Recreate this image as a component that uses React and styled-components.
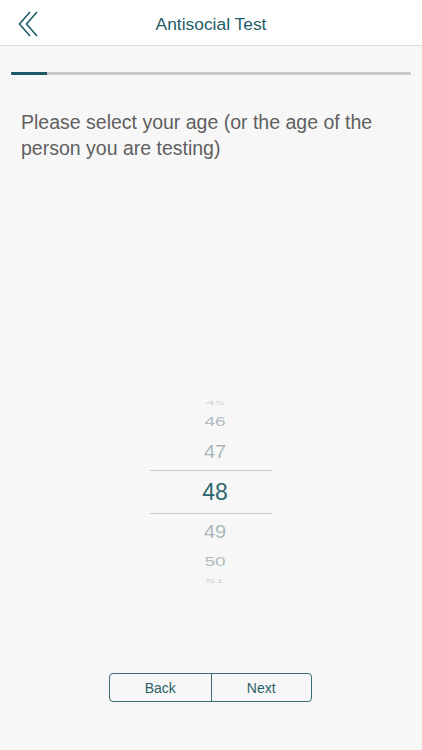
import React, { useState } from "react";
import styled, { createGlobalStyle } from "styled-components";

const GlobalStyle = createGlobalStyle`
  * { box-sizing: border-box; }
  body {
    margin: 0;
    background: #f7f7f7;
    font-family: "Liberation Sans", Arial, sans-serif;
  }
`;

const Page = styled.div`
  width: 422px;
  height: 750px;
  display: flex;
  flex-direction: column;
  background: #f7f7f7;
`;

const Header = styled.header`
  height: 46px;
  display: grid;
  grid-template-columns: 60px 1fr 60px;
  align-items: center;
  background: #fff;
  border-bottom: 1px solid #dcdcdc;
`;

const BackBtn = styled.button`
  border: 0;
  background: none;
  padding: 2px 0 0 17px;
  height: 100%;
  display: flex;
  align-items: center;
  cursor: pointer;
`;

const Title = styled.h1`
  margin: 0;
  padding-top: 3px;
  text-align: center;
  font-size: 17.4px;
  font-weight: 400;
  color: #1f5d67;
`;

const Progress = styled.div`
  margin: 26px 11px 0;
  height: 3px;
  background: #c9c9c9;
  border-radius: 1px;
  overflow: hidden;
`;

const ProgressFill = styled.div`
  height: 100%;
  background: #1f5866;
`;

const Question = styled.p`
  margin: 34px 21px 0;
  font-size: 19.5px;
  line-height: 26px;
  font-weight: 300;
  color: #5f5f5f;
`;

const Picker = styled.div`
  margin: 235px auto 0;
  width: 122px;
  display: flex;
  flex-direction: column;
`;

const Row = styled.div`
  height: ${({ h }) => h}px;
  padding-left: 8px;
  display: flex;
  align-items: center;
  justify-content: center;
  font-size: ${({ size }) => size}px;
  color: ${({ selected }) => (selected ? "#2c6871" : "#a9b7bb")};
  opacity: ${({ fade }) => fade};
  border-top: ${({ selected }) => (selected ? "1px solid #c6cccd" : "0")};
  border-bottom: ${({ selected }) => (selected ? "1px solid #c6cccd" : "0")};
  cursor: pointer;

  span {
    display: inline-block;
    transform: scaleY(${({ sy }) => sy});
  }
`;

const Footer = styled.div`
  margin-top: auto;
  margin-bottom: 48px;
  margin-left: 109px;
  width: 203px;
  height: 29px;
  display: grid;
  grid-template-columns: 1fr 1fr;
  border: 1px solid #3a6b75;
  border-radius: 4px;
  overflow: hidden;
`;

const FooterBtn = styled.button`
  border: 0;
  background: transparent;
  font-family: inherit;
  font-size: 14px;
  color: #2c5f69;
  cursor: pointer;

  & + & {
    border-left: 1px solid #3a6b75;
  }
`;

const rows = [
  { off: -3, h: 14, size: 17, sy: 0.3, fade: 0.5 },
  { off: -2, h: 24, size: 19, sy: 0.7, fade: 0.9 },
  { off: -1, h: 36, size: 20, sy: 0.9, fade: 1 },
  { off: 0, h: 44, size: 23, sy: 1, fade: 1 },
  { off: 1, h: 36, size: 20, sy: 0.9, fade: 1 },
  { off: 2, h: 24, size: 19, sy: 0.65, fade: 0.9 },
  { off: 3, h: 14, size: 17, sy: 0.3, fade: 0.5 },
];

const Chevrons = () => (
  <svg width="24" height="26" viewBox="0 0 24 26" fill="none">
    <polyline points="13,1 2.5,13 13,25" stroke="#1f5d67" strokeWidth="1.6" />
    <polyline points="20,1 9.5,13 20,25" stroke="#1f5d67" strokeWidth="1.6" />
  </svg>
);

const App = () => {
  const [age, setAge] = useState(48);

  return (
    <>
      <GlobalStyle />
      <Page>
        <Header>
          <BackBtn aria-label="Back">
            <Chevrons />
          </BackBtn>
          <Title>Antisocial Test</Title>
        </Header>
        <Progress>
          <ProgressFill style={{ width: "9%" }} />
        </Progress>
        <Question>
          Please select your age (or the age of the person you are testing)
        </Question>
        <Picker>
          {rows.map((r) => (
            <Row
              key={r.off}
              h={r.h}
              size={r.size}
              sy={r.sy}
              fade={r.fade}
              selected={r.off === 0}
              onClick={() => setAge(age + r.off)}
            >
              <span>{age + r.off}</span>
            </Row>
          ))}
        </Picker>
        <Footer>
          <FooterBtn>Back</FooterBtn>
          <FooterBtn>Next</FooterBtn>
        </Footer>
      </Page>
    </>
  );
};

export default App;
